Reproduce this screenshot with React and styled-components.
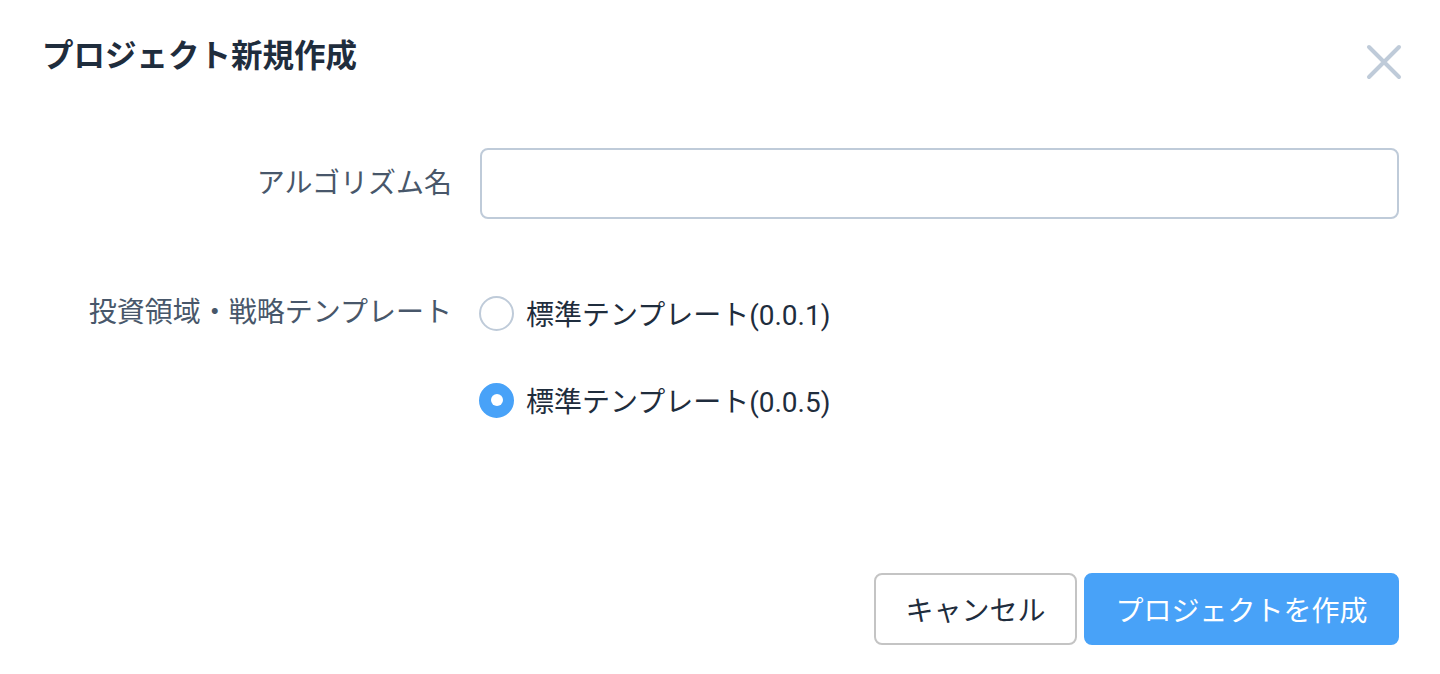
import React, { useState } from 'react';
import styled, { createGlobalStyle } from 'styled-components';

const GlobalStyle = createGlobalStyle`
  html, body {
    margin: 0;
    padding: 0;
    background: #fff;
  }
  body {
    font-family: Roboto, "Noto Sans CJK JP", sans-serif;
  }
`;

const templates = [
  { id: '0.0.1', label: '標準テンプレート(0.0.1)' },
  { id: '0.0.5', label: '標準テンプレート(0.0.5)' },
];

export default function App() {
  const [name, setName] = useState('');
  const [template, setTemplate] = useState('0.0.5');

  return (
    <>
      <GlobalStyle />
      <Dialog>
        <Header>
          <Title>プロジェクト新規作成</Title>
          <CloseButton aria-label="close">
            <svg width="36" height="36" viewBox="0 0 36 36">
              <path d="M3 3L33 33M33 3L3 33" stroke="#bfcbd9" strokeWidth="4" strokeLinecap="round" />
            </svg>
          </CloseButton>
        </Header>

        <Form>
          <Label $height={72}>アルゴリズム名</Label>
          <Input value={name} onChange={(e) => setName(e.target.value)} />

          <Label $height={60} $top={63}>投資領域・戦略テンプレート</Label>
          <RadioGroup>
            {templates.map((t) => (
              <RadioItem key={t.id} onClick={() => setTemplate(t.id)}>
                <RadioCircle $checked={template === t.id} />
                <RadioText>{t.label}</RadioText>
              </RadioItem>
            ))}
          </RadioGroup>
        </Form>

        <Footer>
          <Button>キャンセル</Button>
          <Button $primary>プロジェクトを作成</Button>
        </Footer>
      </Dialog>
    </>
  );
}

const Dialog = styled.div`
  width: 1440px;
  height: 674px;
  box-sizing: border-box;
  background: #fff;
  display: flex;
  flex-direction: column;
`;

const Header = styled.div`
  display: flex;
  justify-content: space-between;
  align-items: flex-start;
  padding: 36px 38px 0 42px;
`;

const Title = styled.h1`
  margin: 0;
  font-size: 31.5px;
  line-height: 34px;
  font-weight: 700;
  color: #1f2d3d;
  font-family: "Noto Sans CJK JP", sans-serif;
`;

const CloseButton = styled.button`
  margin-top: 8px;
  width: 36px;
  height: 36px;
  padding: 0;
  border: none;
  background: none;
  cursor: pointer;
  display: flex;
  svg {
    display: block;
  }
`;

const Form = styled.div`
  display: grid;
  grid-template-columns: 410px 1fr;
  column-gap: 28px;
  padding: 0 41px 0 42px;
  margin-top: 68px;
  align-items: start;
`;

const Label = styled.div`
  text-align: right;
  font-size: 28px;
  line-height: ${(p) => p.$height}px;
  margin-top: ${(p) => p.$top || 0}px;
  color: #48576a;
  white-space: nowrap;
`;

const Input = styled.input`
  box-sizing: border-box;
  width: 100%;
  height: 71px;
  border: 2px solid #bfcbd9;
  border-radius: 8px;
  padding: 0 20px;
  font-size: 28px;
  color: #1f2d3d;
  outline: none;
  font-family: inherit;
`;

const RadioGroup = styled.div`
  display: flex;
  flex-direction: column;
  gap: 27px;
  margin-top: 63px;
`;

const RadioItem = styled.label`
  display: flex;
  align-items: center;
  height: 60px;
  cursor: pointer;
`;

const RadioCircle = styled.span`
  box-sizing: border-box;
  width: 35px;
  height: 35px;
  border-radius: 50%;
  border: 2px solid ${(p) => (p.$checked ? '#48a2f8' : '#bfcbd9')};
  background: ${(p) => (p.$checked ? '#48a2f8' : '#fff')};
  display: flex;
  align-items: center;
  justify-content: center;
  margin-left: -1px;
  &::after {
    content: '';
    width: 12px;
    height: 12px;
    border-radius: 50%;
    background: #fff;
    display: ${(p) => (p.$checked ? 'block' : 'none')};
  }
`;

const RadioText = styled.span`
  margin-left: 12px;
  font-size: 28px;
  color: #1f2d3d;
`;

const Footer = styled.div`
  display: flex;
  justify-content: flex-end;
  gap: 7px;
  padding: 0 41px 0 0;
  margin-top: 143px;
`;

const Button = styled.button`
  box-sizing: border-box;
  height: 72px;
  padding: 0 29.5px;
  border-radius: 8px;
  font-size: 28px;
  font-family: inherit;
  cursor: pointer;
  border: 2px solid ${(p) => (p.$primary ? '#48a2f8' : '#c4c4c4')};
  background: ${(p) => (p.$primary ? '#48a2f8' : '#fff')};
  color: ${(p) => (p.$primary ? '#fff' : '#1f2d3d')};
`;
